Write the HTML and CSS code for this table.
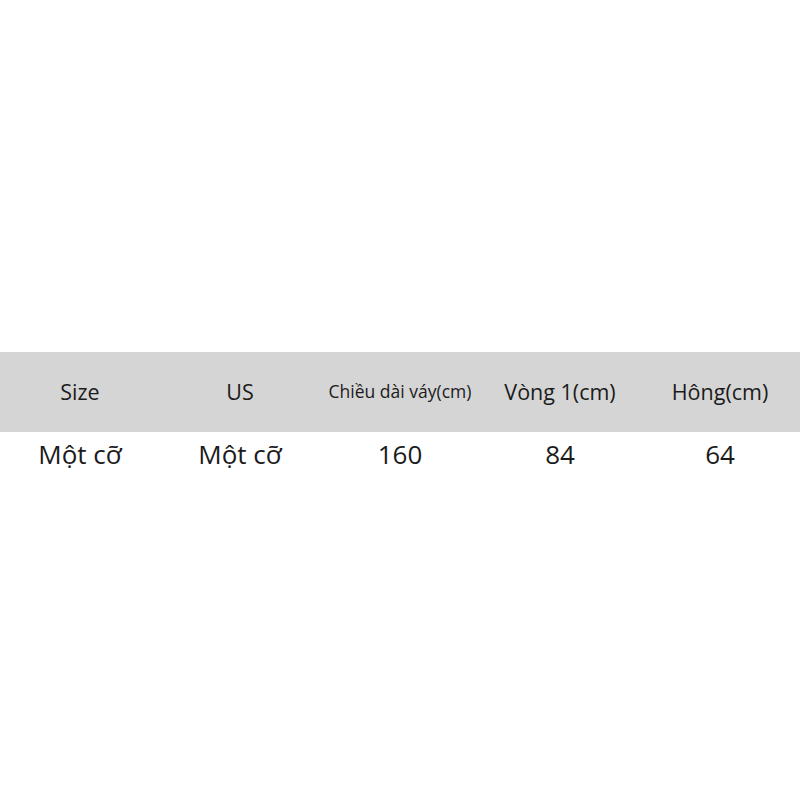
FILE: index.html
```html
<!DOCTYPE html>
<html lang="vi">
<head>
<meta charset="utf-8">
<link rel="stylesheet" href="styles.css">
</head>
<body>
<div class="page">
  <div class="row head">
    <div class="cell">Size</div>
    <div class="cell">US</div>
    <div class="cell small">Chiều dài váy(cm)</div>
    <div class="cell">Vòng 1(cm)</div>
    <div class="cell">Hông(cm)</div>
  </div>
  <div class="row data">
    <div class="cell">Một cỡ</div>
    <div class="cell">Một cỡ</div>
    <div class="cell">160</div>
    <div class="cell">84</div>
    <div class="cell">64</div>
  </div>
</div>
</body>
</html>
```

FILE: styles.css
```css
html, body {
  margin: 0;
  padding: 0;
  background: #ffffff;
}
.page {
  width: 800px;
  height: 800px;
  padding-top: 352px;
  box-sizing: border-box;
  font-family: "Open Sans", "Noto Sans", sans-serif;
  color: #1b1b1b;
}
.row {
  display: grid;
  grid-template-columns: repeat(5, 160px);
}
.head {
  height: 80px;
  background: #d5d5d5;
  font-size: 21.5px;
}
.data {
  height: 44px;
  font-size: 26px;
}
.cell {
  display: flex;
  align-items: center;
  justify-content: center;
  white-space: nowrap;
}
.head .cell {
  padding-bottom: 2px;
}
.small {
  font-size: 17.5px;
}
```
